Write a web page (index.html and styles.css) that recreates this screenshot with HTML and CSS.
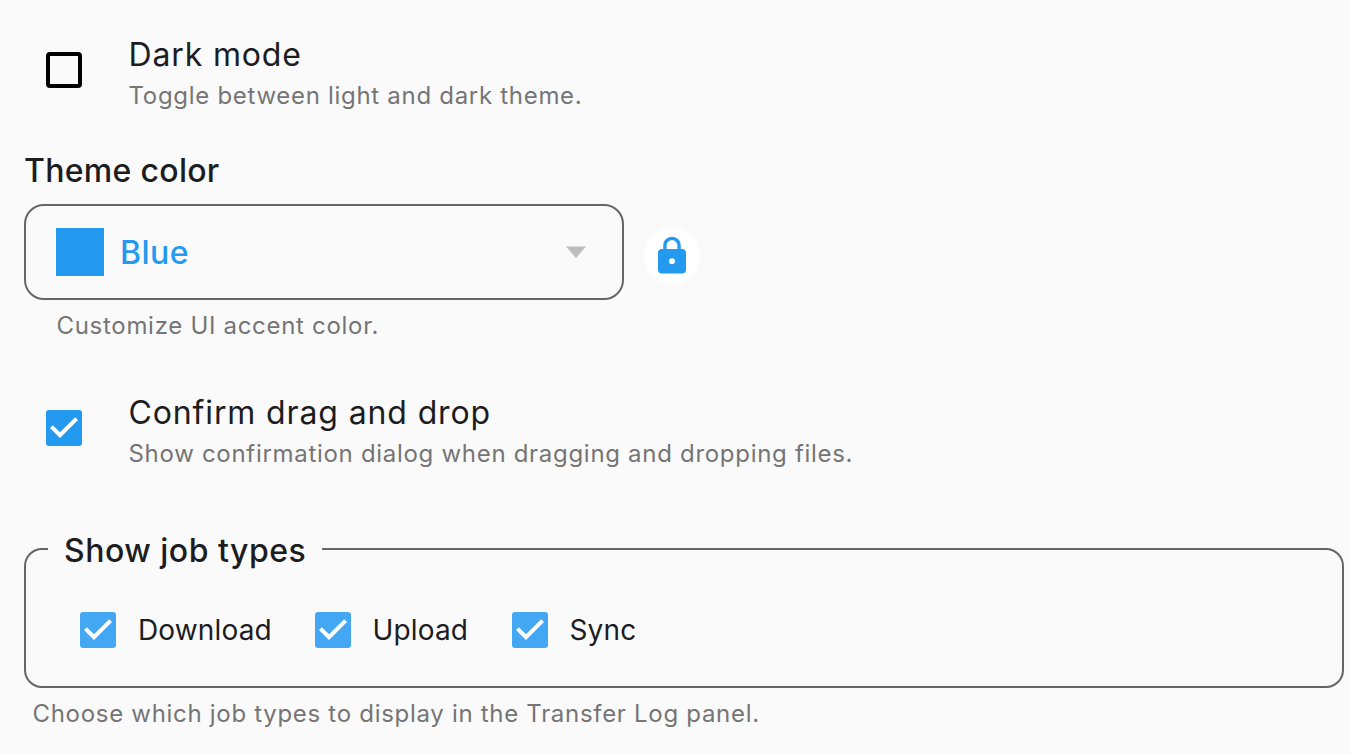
FILE: index.html
```html
<!DOCTYPE html>
<html lang="en">
<head>
<meta charset="utf-8">
<title>Settings</title>
<link rel="stylesheet" href="styles.css">
</head>
<body>
<main class="settings">
  <section class="option">
    <span class="box"></span>
    <div class="copy">
      <div class="title dark-title">Dark mode</div>
      <div class="hint dark-hint">Toggle between light and dark theme.</div>
    </div>
  </section>
  <h2 class="heading"><span>Theme color</span></h2>
  <div class="theme-row">
    <div class="select">
      <span class="swatch"></span>
      <span class="value">Blue</span>
      <svg class="caret" viewBox="0 0 20 12"><path d="M0 0.500H20L10 12Z"/></svg>
    </div>
    <div class="lock">
      <svg viewBox="0 0 24 24"><path fill-rule="evenodd" d="M18 8H17V6C17 3.240 14.760 1 12 1S7 3.240 7 6V8H6C4.900 8 4 8.900 4 10V20C4 21.100 4.900 22 6 22H18C19.100 22 20 21.100 20 20V10C20 8.900 19.100 8 18 8ZM12 16.700A1.700 1.700 0 1 1 12 13.300A1.700 1.700 0 0 1 12 16.700ZM15.100 8H8.900V6A3.100 3.100 0 0 1 15.100 6Z"/></svg>
    </div>
  </div>
  <div class="hint custom-hint">Customize UI accent color.</div>
  <section class="option">
    <span class="box checked"><svg viewBox="3 3 18 18"><path d="M10 17l-5-5 1.410-1.410L10 14.170l7.590-7.590L19 8z"/></svg></span>
    <div class="copy">
      <div class="title confirm-title">Confirm drag and drop</div>
      <div class="hint confirm-hint">Show confirmation dialog when dragging and dropping files.</div>
    </div>
  </section>
  <fieldset class="jobs">
    <legend class="legend">Show job types</legend>
    <div class="job-list">
      <label class="job download"><span class="box checked light"><svg viewBox="3 3 18 18"><path d="M10 17l-5-5 1.410-1.410L10 14.170l7.590-7.590L19 8z"/></svg></span><span class="job-name">Download</span></label>
      <label class="job upload"><span class="box checked light"><svg viewBox="3 3 18 18"><path d="M10 17l-5-5 1.410-1.410L10 14.170l7.590-7.590L19 8z"/></svg></span><span class="job-name">Upload</span></label>
      <label class="job sync"><span class="box checked light"><svg viewBox="3 3 18 18"><path d="M10 17l-5-5 1.410-1.410L10 14.170l7.590-7.590L19 8z"/></svg></span><span class="job-name">Sync</span></label>
    </div>
  </fieldset>
  <div class="hint jobs-hint">Choose which job types to display in the Transfer Log panel.</div>
</main>
</body>
</html>
```
FILE: styles.css
```css
* { box-sizing: border-box; }
body {
  margin: 0;
  background: #fafafa;
  color: #1d1d1f;
  font-family: Inter, "Liberation Sans", sans-serif;
  overflow: hidden;
}
svg { display: block; }
.settings {
  display: flex;
  flex-direction: column;
  height: 754px;
  padding: 34px 6px 0 24px;
  white-space: nowrap;
}
.option { display: flex; height: 80px; padding-left: 22px; }
.box {
  flex: none;
  width: 36px;
  height: 36px;
  border: 4px solid #000;
  border-radius: 4px;
}
.option .box { margin-top: 18px; }
.checked { border: 0; background: #2499f0; border-radius: 3px; }
.checked svg { width: 36px; height: 36px; fill: #fff; }
.light { background: #44a7f3; }
.copy { margin-left: 46.5px; }
.title { font-size: 32px; line-height: 41px; }
.hint { font-size: 24px; line-height: 42px; color: #757575; letter-spacing: 0.7px; }
.dark-title { letter-spacing: 0.85px; }
.confirm-title { letter-spacing: 0.87px; }
.heading {
  margin: 36px 0 0;
  font-size: 32px;
  font-weight: 500;
  line-height: 41px;
  letter-spacing: 0.3px;
}
.theme-row { display: flex; gap: 20px; margin-top: 13px; height: 96px; }
.select {
  display: flex;
  align-items: center;
  width: 600px;
  padding: 0 36px 0 30px;
  border: 2px solid #666;
  border-radius: 20px;
}
.swatch { width: 48px; height: 48px; background: #2499f0; }
.value {
  margin-left: 16px;
  color: #2499f0;
  font-size: 32px;
  font-weight: 500;
  line-height: 41px;
  letter-spacing: 0.5px;
}
.caret { width: 20px; height: 12px; margin-left: auto; fill: #bdbdbd; }
.lock {
  width: 56px;
  height: 56px;
  margin-top: 24px;
  padding: 7px;
  background: #fff;
  border-radius: 50%;
}
.lock svg { width: 42px; height: 42px; fill: #2499f0; }
.custom-hint { margin: 5px 0 45px 32.5px; }
.jobs {
  margin: 58px 0 0;
  height: 158px;
  padding: 0;
  border: 2px solid #666;
  border-radius: 18px;
}
.legend {
  height: 38px;
  margin-left: 22px;
  padding: 1px 16px 0;
  font-size: 32px;
  font-weight: 500;
  line-height: 39px;
  letter-spacing: 0.5px;
}
.job-list { display: flex; padding: 44px 0 0 54px; }
.job { display: flex; align-items: center; height: 36px; }
.download { width: 234.5px; }
.upload { width: 197px; }
.job-name { margin-left: 22px; font-size: 28px; line-height: 36px; letter-spacing: 0.15px; }
.jobs-hint { margin: 5px 0 0 8.5px; }
```
